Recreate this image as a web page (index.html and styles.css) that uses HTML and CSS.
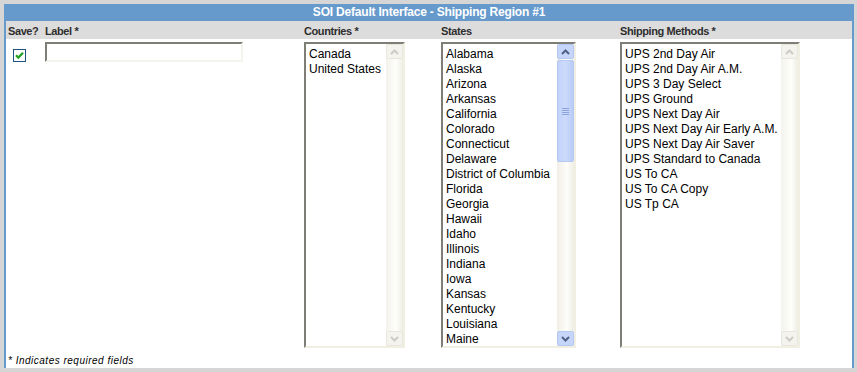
FILE: index.html
```html
<!DOCTYPE html>
<html>
<head>
<meta charset="utf-8">
<title>SOI Default Interface - Shipping Region #1</title>
<link rel="stylesheet" href="styles.css">
</head>
<body>
<div class="panel">
  <div class="title">SOI Default Interface - Shipping Region #1</div>
  <div class="grid head">
    <div class="c1">Save?</div>
    <div class="c2">Label *</div>
    <div class="c3">Countries *</div>
    <div class="c4">States</div>
    <div class="c5">Shipping Methods *</div>
  </div>
  <div class="grid body">
    <div class="c1"><span class="check"><svg width="11" height="11" viewBox="0 0 11 11"><path d="M2 5.2 L4.3 7.6 L9 2.8" fill="none" stroke="#21a121" stroke-width="2.2"/></svg></span></div>
    <div class="c2"><span class="input"></span></div>
    <div class="c3">
      <div class="list w-countries">
        <div class="items">
          <div>Canada</div>
          <div>United States</div>
        </div>
        <div class="sb off">
          <div class="btn"><svg width="9" height="6" viewBox="0 0 9 6"><path d="M1 5 L4.5 1.5 L8 5" fill="none" stroke="#cdccc3" stroke-width="2"/></svg></div>
          <div class="track"></div>
          <div class="btn"><svg width="9" height="6" viewBox="0 0 9 6"><path d="M1 1 L4.5 4.5 L8 1" fill="none" stroke="#cdccc3" stroke-width="2"/></svg></div>
        </div>
      </div>
    </div>
    <div class="c4">
      <div class="list w-states">
        <div class="items">
          <div>Alabama</div><div>Alaska</div><div>Arizona</div><div>Arkansas</div><div>California</div><div>Colorado</div><div>Connecticut</div><div>Delaware</div><div>District of Columbia</div><div>Florida</div><div>Georgia</div><div>Hawaii</div><div>Idaho</div><div>Illinois</div><div>Indiana</div><div>Iowa</div><div>Kansas</div><div>Kentucky</div><div>Louisiana</div><div>Maine</div>
        </div>
        <div class="sb on">
          <div class="btn"><svg width="9" height="6" viewBox="0 0 9 6"><path d="M1 5 L4.5 1.5 L8 5" fill="none" stroke="#4d6185" stroke-width="2"/></svg></div>
          <div class="track">
            <div class="thumb"><span class="grip"></span></div>
          </div>
          <div class="btn"><svg width="9" height="6" viewBox="0 0 9 6"><path d="M1 1 L4.5 4.5 L8 1" fill="none" stroke="#4d6185" stroke-width="2"/></svg></div>
        </div>
      </div>
    </div>
    <div class="c5">
      <div class="list w-ship">
        <div class="items">
          <div>UPS 2nd Day Air</div><div>UPS 2nd Day Air A.M.</div><div>UPS 3 Day Select</div><div>UPS Ground</div><div>UPS Next Day Air</div><div>UPS Next Day Air Early A.M.</div><div>UPS Next Day Air Saver</div><div>UPS Standard to Canada</div><div>US To CA</div><div>US To CA Copy</div><div>US Tp CA</div>
        </div>
        <div class="sb off">
          <div class="btn"><svg width="9" height="6" viewBox="0 0 9 6"><path d="M1 5 L4.5 1.5 L8 5" fill="none" stroke="#cdccc3" stroke-width="2"/></svg></div>
          <div class="track"></div>
          <div class="btn"><svg width="9" height="6" viewBox="0 0 9 6"><path d="M1 1 L4.5 4.5 L8 1" fill="none" stroke="#cdccc3" stroke-width="2"/></svg></div>
        </div>
      </div>
    </div>
  </div>
  <div class="note">* Indicates required fields</div>
</div>
</body>
</html>
```
FILE: styles.css
```css
html, body {
  margin: 0;
  padding: 0;
  background: #d6d6d6;
}
body {
  padding: 4px 3px 4px 4px;
  font-family: "Liberation Sans", Arial, sans-serif;
}
.panel {
  width: 846px;
  height: 364px;
  background: #ffffff;
  border-left: 2px solid #6699cc;
  border-right: 2px solid #6699cc;
  display: flex;
  flex-direction: column;
}
.title {
  height: 17px;
  background: #6699cc;
  color: #ffffff;
  font-weight: bold;
  font-size: 12px;
  line-height: 17px;
  text-align: center;
  letter-spacing: -0.2px;
}
.grid {
  display: grid;
  grid-template-columns: 37px 259px 137px 179px 234px;
}
.head {
  height: 17px;
  padding-top: 1px;
  background: #dcdcdc;
  color: #2e2e2e;
  font-weight: bold;
  font-size: 11px;
  line-height: 19px;
  letter-spacing: -0.4px;
}
.head > div {
  padding-left: 2px;
}
.body {
  padding-top: 3px;
}
.body > div {
  padding-left: 2px;
}
.body > .c1 {
  padding-left: 7px;
  padding-top: 7px;
}
.check {
  display: flex;
  align-items: center;
  justify-content: center;
  width: 11px;
  height: 11px;
  border: 1px solid #1c5180;
  background: #ffffff;
}
.input {
  display: block;
  width: 194px;
  height: 16px;
  border-style: solid;
  border-width: 2px;
  border-color: #7e7e76 #f4f3ee #f4f3ee #7e7e76;
  background: #ffffff;
}
.list {
  height: 302px;
  border-style: solid;
  border-width: 2px;
  border-color: #7e7e76 #f1efe2 #f1efe2 #7e7e76;
  display: flex;
  overflow: hidden;
  background: #ffffff;
}
.w-countries { width: 97px; }
.w-states { width: 131px; }
.w-ship { width: 176px; }
.items {
  flex: 1;
  min-width: 0;
  overflow: hidden;
  padding: 3px 0 0 3px;
  font-size: 12px;
  line-height: 15px;
  color: #000000;
  white-space: nowrap;
}
.sb {
  width: 17px;
  flex: none;
  display: flex;
  flex-direction: column;
}
.sb .btn {
  height: 15px;
  border-radius: 2px;
  display: flex;
  align-items: center;
  justify-content: center;
  box-sizing: border-box;
}
.sb .track {
  flex: 1;
  position: relative;
}
.off {
  background: linear-gradient(to right, #f3f2ec, #fefefb 60%, #eeede5);
}
.off .btn {
  border: 1px solid #e8e7df;
  background: #f4f3ee;
}
.on {
  background: linear-gradient(to right, #f0eee5, #fdfdfa 60%, #eeede5);
}
.on .btn {
  border: 1px solid #b5c8f1;
  background: #c6d6fb;
}
.thumb {
  margin-top: 1px;
  height: 100px;
  border: 1px solid #b5c8f1;
  border-radius: 2px;
  background: linear-gradient(to right, #c2d3fb, #ccdafb 50%, #b9ccf8);
  display: flex;
  align-items: center;
  justify-content: center;
}
.grip {
  width: 7px;
  height: 7px;
  background: repeating-linear-gradient(to bottom, #8ba4dc 0 1px, transparent 1px 2px);
}
.note {
  margin-top: 7px;
  padding-left: 2px;
  font-size: 10px;
  font-style: italic;
  letter-spacing: 0.5px;
  color: #000000;
}
```
